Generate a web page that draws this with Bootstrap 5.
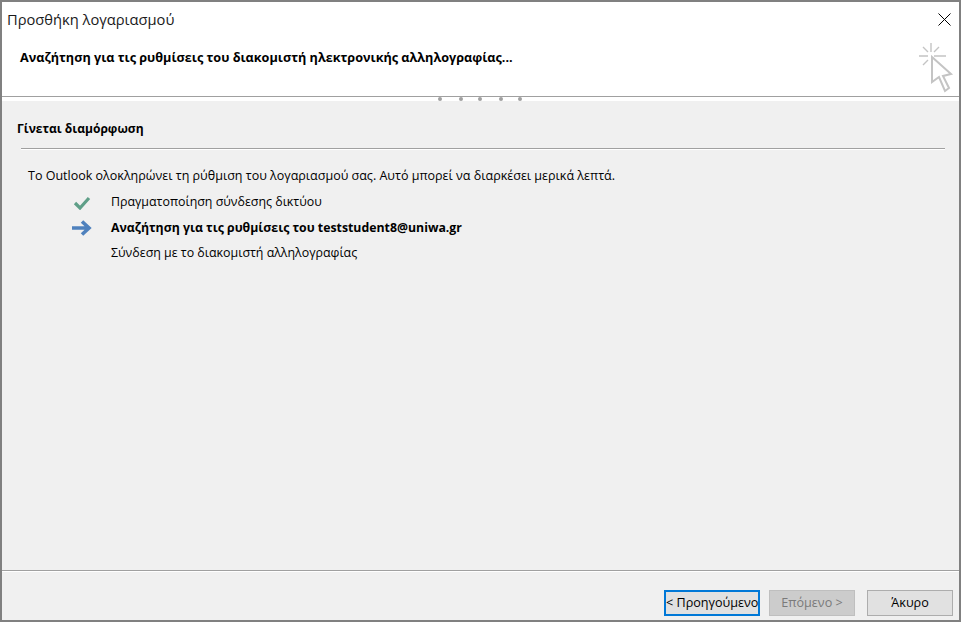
<!DOCTYPE html>
<html lang="el"><head><meta charset="utf-8">
<title>Προσθήκη λογαριασμού</title>
<link href="https://cdn.jsdelivr.net/npm/bootstrap@5.3.0/dist/css/bootstrap.min.css" rel="stylesheet">
<style>
html,body{height:622px;margin:0;overflow:hidden;background:#f0f0f0}
body{font-family:"Open Sans","Noto Sans",sans-serif;color:#000;font-size:12.4px}
.dlg{height:622px;border:2px solid #808080;background:#f0f0f0}
.hd{height:94px;background:#fff;position:relative}
.ttl{font-size:14.7px;line-height:20px;padding:7px 0 0 5px;color:#1a1a1a}
.sub{font-size:12.65px;font-weight:700;line-height:18px;padding:19px 0 0 18px}
.xbtn{position:absolute;right:8px;top:11px;width:13px;height:13px}
.wiz{position:absolute;left:915px;top:40px;width:38px;height:54px}
.sep{background:#fff;border-top:1px solid #a0a0a0;box-sizing:content-box;position:relative;height:4px}
.dot{width:4px;height:4px;border-radius:50%;background:#a0a0a0;position:absolute;top:0}
.sect{font-weight:700;font-size:12.05px;line-height:16px;padding:20px 0 0 15px}
.rule{margin:11px 14px 0 19px;border-top:1px solid #a0a0a0;height:1px;border-bottom:1px solid #fff}
.intro{padding:17px 0 0 26px;line-height:18px;font-size:12.53px}
.step{height:25.5px;align-items:center;padding-left:109px;position:relative}
.steps{padding-top:5px}
.step svg{position:absolute;left:69px}
.step.fw-bold{font-size:12.3px}
.bot{height:50px;border-top:1px solid #a0a0a0;margin-top:auto;padding:19px 6px 0 0;justify-content:flex-end;box-shadow:inset 0 1px 0 #fff}
.wb{height:26px;width:86px;border:1px solid #adadad;background:#e1e1e1;font-size:12.6px;line-height:1;padding:0;color:#000;border-radius:0;white-space:nowrap;overflow:hidden}
.wb.fc{width:96px;border:2px solid #0078d7;margin-right:9px}
.wb.dis{background:#cccccc;border-color:#bfbfbf;color:#7a7a7a;margin-right:12px}
</style></head><body>
<div class="dlg d-flex flex-column">
 <div class="hd">
  <div class="ttl">Προσθήκη λογαριασμού</div>
  <div class="sub">Αναζήτηση για τις ρυθμίσεις του διακομιστή ηλεκτρονικής αλληλογραφίας...</div>
  <svg class="xbtn" viewBox="0 0 13 13"><path d="M.5.5l12 12M12.500.5l-12 12" stroke="#000" fill="none"/></svg>
  <svg class="wiz" viewBox="0 0 38 54"><g stroke="#c4c4c4" stroke-width="1.4" fill="none"><path d="M2 14h9M17 14h12M14 1v9M6 5l5 5M22 5l-5 5M6 23l5-5"/><path stroke-width="2" d="M15 15v25l7-5 6 14 4-3-6-12 8-2z" fill="#fff"/></g></svg>
 </div>
 <div class="sep">
  <i class="dot" style="left:436px"></i><i class="dot" style="left:457px"></i><i class="dot" style="left:476px"></i><i class="dot" style="left:497px"></i><i class="dot" style="left:516px"></i>
 </div>
 <div class="sect">Γίνεται διαμόρφωση</div>
 <div class="rule"></div>
 <div class="intro">Το Outlook ολοκληρώνει τη ρύθμιση του λογαριασμού σας. Αυτό μπορεί να διαρκέσει μερικά λεπτά.</div>
 <div class="steps">
  <div class="step d-flex"><svg width="20" height="14" viewBox="0 0 20 14"><path d="M4 7l5 5 9-10" stroke="#5f9f88" stroke-width="3.2" fill="none"/></svg><span>Πραγματοποίηση σύνδεσης δικτύου</span></div>
  <div class="step d-flex fw-bold"><svg width="22" height="16" viewBox="0 0 22 16"><path d="M1 8h17M11 1.500l7 6.500-7 6.500" stroke="#4f81bd" stroke-width="3.600" fill="none"/></svg><span>Αναζήτηση για τις ρυθμίσεις του teststudent8@uniwa.gr</span></div>
  <div class="step d-flex"><span>Σύνδεση με το διακομιστή αλληλογραφίας</span></div>
 </div>
 <div class="bot d-flex">
  <button class="btn wb fc" type="button">&lt; Προηγούμενο</button>
  <button class="btn wb dis" type="button">Επόμενο &gt;</button>
  <button class="btn wb" type="button">Άκυρο</button>
 </div>
</div>
<script src="https://cdn.jsdelivr.net/npm/bootstrap@5.3.0/dist/js/bootstrap.bundle.min.js"></script>
</body></html>
